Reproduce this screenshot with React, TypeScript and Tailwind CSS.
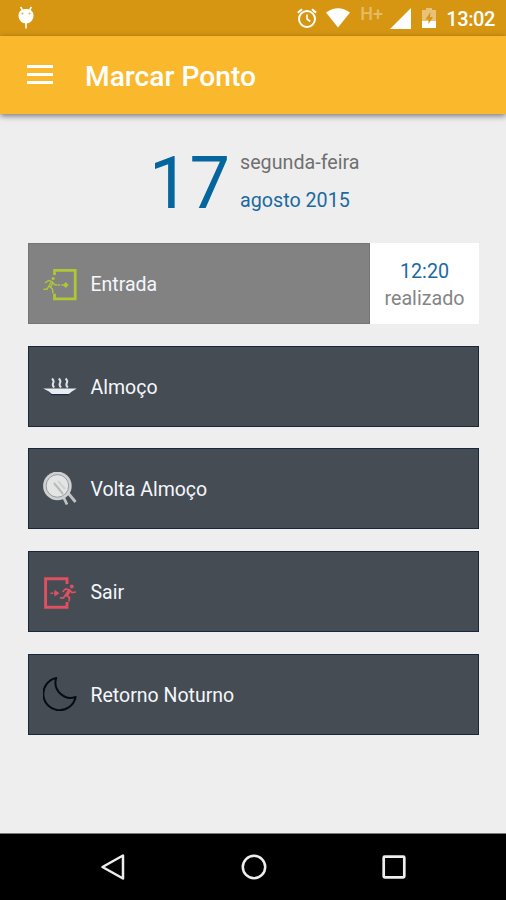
import type { ReactNode } from "react";

function EnterIcon() {
  return (
    <svg viewBox="0 0 34 34" className="w-[34px] h-[34px]" fill="none" stroke="#b0c634">
      <path d="M11.500 8V3.400h20.700v28.400H11.500v-5" strokeWidth="2.800" />
      <path d="M14.500 18h7" strokeWidth="1.600" strokeDasharray="2.500 1.200" />
      <path d="M20 18l2.700-2.900 3 2.900-3 2.900z" fill="#b0c634" stroke="none" />
      <circle cx="10.200" cy="11.500" r="1.600" fill="#b0c634" stroke="none" />
      <path d="M2 16l3.500-2.500 3.500 1 2.500 3 2.500.5M8.500 14.500L6 19l3.500 3 .5 4.500M6 19l-2 3.200H.5M10 15l-2 5" strokeWidth="1.400" />
    </svg>
  );
}

function LunchIcon() {
  return (
    <svg viewBox="0 0 34 34" className="w-[34px] h-[34px]">
      <path d="M.2 19.500h33.600l-5 3-3 2.500H9l-3-2.500z" fill="#e9edf3" />
      <path d="M8 25.600h18" stroke="#1d2c45" strokeWidth="1.200" />
      <path
        d="M9 9.500q2.500 2.500 1.200 4.500t1 4.500M15.800 9.500q2.500 2.500 1.200 4.500t1 4.500M22.600 9.500q2.500 2.500 1.200 4.500t1 4.500"
        fill="none"
        stroke="#dce1e9"
        strokeWidth="2"
      />
    </svg>
  );
}

function PlateIcon() {
  return (
    <svg viewBox="0 0 34 34" className="w-[34px] h-[34px]" fill="none">
      <path d="M20 24l4 8.500M25.500 21.500l7 8.500" stroke="#bfc3c5" strokeWidth="2.800" />
      <circle cx="14.400" cy="13.900" r="14.300" fill="#cfd1d1" />
      <circle cx="14.400" cy="13.900" r="11.300" fill="#e3e4e3" stroke="#969b9d" strokeWidth="1" />
      <path d="M11 11l9 11" stroke="#b7baba" strokeWidth="2" />
      <path d="M15 9l7 8" stroke="#d0d2d1" strokeWidth="2" />
    </svg>
  );
}

function ExitIcon() {
  return (
    <svg viewBox="0 0 34 34" className="w-[34px] h-[34px]" fill="none" stroke="#df5060">
      <path d="M24 9V3.800H2.600v28.400H24V27" strokeWidth="2.900" />
      <path d="M7.500 18.200h5" strokeWidth="1.600" strokeDasharray="2.500 .7" />
      <path d="M11.500 14.800l5 3.400-5 3.400z" fill="#df5060" stroke="none" />
      <circle cx="28.800" cy="11.500" r="1.900" fill="#df5060" stroke="none" />
      <path d="M19.500 17l3-3 4 .7 2.500 3 4-.7M26 14.500L22.500 20l4 2.500-.5 4M22.500 20l-2 2.800h-3.500M27 16l-3 5" strokeWidth="1.700" />
    </svg>
  );
}

function MoonIcon() {
  return (
    <svg viewBox="0 0 34 34" className="w-[34px] h-[34px]">
      <path
        d="M13.200 1A16.300 16.300 0 1 0 32.600 20C21 24 9.500 13 13.200 1z"
        fill="none"
        stroke="#060c14"
        strokeWidth="2"
        strokeLinejoin="round"
      />
    </svg>
  );
}

function StatusBar() {
  return (
    <div className="h-9 bg-[#d69612] flex items-center justify-between pl-[18px] pr-[11px] text-white">
      <svg viewBox="0 0 16 24" className="w-4 h-6">
        <path d="M2.500 1l2 3M13.500 1l-2 3M8 16v6.500" stroke="#fff" strokeWidth="1.600" />
        <path d="M.5 9.500C.5 5 4 3 8 3s7.500 2 7.500 6.500S12 17.500 8 17.500.5 14 .5 9.500z" fill="#fff" />
        <circle cx="4.500" cy="7.500" r="1" fill="#e0a84c" />
        <circle cx="11.500" cy="7.500" r="1" fill="#e0a84c" />
      </svg>
      <div className="flex items-center">
        <svg viewBox="0 0 20 20" className="w-5 h-5 mr-[9px]" fill="none" stroke="#fff">
          <circle cx="10" cy="11" r="8" strokeWidth="2" />
          <path d="M10 6.500V11l3.300 2.500" strokeWidth="1.600" />
          <path d="M.8 4.800L5 1.200M19.200 4.800L15 1.200" strokeWidth="2" />
        </svg>
        <svg viewBox="0 0 24 20" className="w-6 h-5 mr-[10px]">
          <path d="M0 4.500Q12-4 24 4.500L12 19.500z" fill="#fff" />
        </svg>
        <span className="text-[18px] leading-5 w-[30px] -mt-2 font-medium text-[#e6bb67]">H+</span>
        <svg viewBox="0 0 21 21" className="w-[21px] h-[21px] mr-[11px]">
          <path d="M21 0v21H0z" fill="#fff" />
        </svg>
        <svg viewBox="0 0 14 20" className="w-[14px] h-5 mr-[10px]">
          <path d="M4 0h6v2h4v11H0V2h4z" fill="#e9c27a" />
          <path d="M0 13h14v7H0z" fill="#fff" />
          <path d="M8.500 4L3.500 11.500h3V16l4.500-7H8z" fill="#d69612" />
        </svg>
        <span className="text-[20px] leading-6 font-medium tracking-[-0.4px] mt-[2px]">13:02</span>
      </div>
    </div>
  );
}

function Row({ icon, label, done }: { icon: ReactNode; label: string; done?: string }) {
  return (
    <div className="flex h-[81px]">
      <div
        className={
          done
            ? "flex-1 flex items-center pl-[14px] bg-[#828282] border border-[#757575]"
            : "flex-1 flex items-center pl-[14px] bg-[#454c54] border border-[#17283a]"
        }
      >
        {icon}
        <span className="ml-[13.5px] mt-[3px] text-[19.5px] leading-[30px] text-[#f4f7fc]">{label}</span>
      </div>
      {done && (
        <div className="w-[109px] bg-white flex flex-col items-center justify-center pt-[2px] text-[19.7px] leading-[27px]">
          <span className="text-[#1b6a9f]">{done}</span>
          <span className="text-[#858585]">realizado</span>
        </div>
      )}
    </div>
  );
}

export default function App() {
  return (
    <div className="w-full h-[900px] flex flex-col bg-[#eeeeee] font-[Roboto,sans-serif]">
      <StatusBar />
      <header className="h-[78px] bg-[#fab82d] flex items-center pl-[27px] shadow-[0_2px_6px_rgba(0,0,0,0.5)]">
        <div className="w-[26px] flex flex-col gap-[5px] -mt-[2px]">
          <div className="h-[3px] bg-white" />
          <div className="h-[3px] bg-white" />
          <div className="h-[3px] bg-white" />
        </div>
        <h1 className="ml-8 mt-1 text-[28.2px] font-medium text-white">Marcar Ponto</h1>
      </header>

      <main className="flex-1 pl-[28px] pr-[27px]">
        <div className="h-[129px] flex pl-[121px] pt-[30px]">
          <span className="w-[91px] text-[72px] leading-[80px] text-[#04659f]">17</span>
          <div className="flex flex-col text-[19.7px] leading-[38px]">
            <span className="text-[#707070]">segunda-feira</span>
            <span className="text-[#1b6a9f]">agosto 2015</span>
          </div>
        </div>
        <div className="flex flex-col gap-[21.7px]">
          <Row icon={<EnterIcon />} label="Entrada" done="12:20" />
          <Row icon={<LunchIcon />} label="Almoço" />
          <Row icon={<PlateIcon />} label="Volta Almoço" />
          <Row icon={<ExitIcon />} label="Sair" />
          <Row icon={<MoonIcon />} label="Retorno Noturno" />
        </div>
      </main>

      <nav className="h-[67px] bg-black border-t border-[#777] flex items-center justify-between pl-[100px] pr-[99px]">
        <svg viewBox="0 0 26 28" className="w-[26px] h-7" fill="none" stroke="#eee" strokeWidth="2.5">
          <path d="M23 2.500v23L2.500 14z" strokeLinejoin="round" />
        </svg>
        <svg viewBox="0 0 26 26" className="w-[26px] h-[26px]" fill="none" stroke="#eee" strokeWidth="2.5">
          <circle cx="13" cy="13" r="11.200" />
        </svg>
        <svg viewBox="0 0 26 26" className="w-[26px] h-[26px]" fill="none" stroke="#eee" strokeWidth="2.700">
          <rect x="2.700" y="2.700" width="20.600" height="20.600" rx="1" />
        </svg>
      </nav>
    </div>
  );
}
